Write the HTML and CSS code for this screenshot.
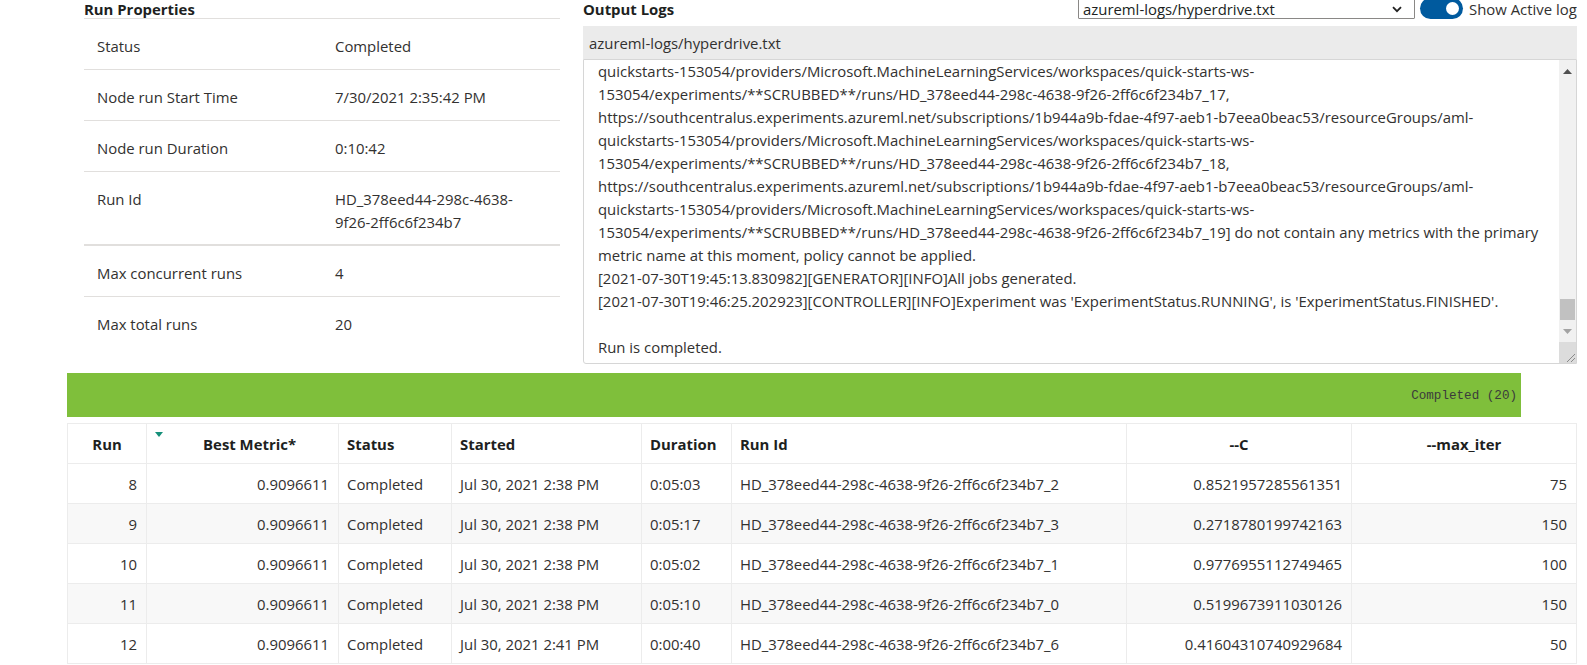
FILE: index.html
```html
<!DOCTYPE html>
<html lang="en">
<head>
<meta charset="utf-8">
<title>Run details</title>
<link rel="stylesheet" href="styles.css">
</head>
<body>
<div class="page">
  <div class="top">
    <section class="props">
      <h2 class="sec-title">Run Properties</h2>
      <div class="prop-row"><div class="prop-label">Status</div><div class="prop-value">Completed</div></div>
      <div class="prop-row"><div class="prop-label">Node run Start Time</div><div class="prop-value">7/30/2021 2:35:42 PM</div></div>
      <div class="prop-row"><div class="prop-label">Node run Duration</div><div class="prop-value">0:10:42</div></div>
      <div class="prop-row prop-row--thick"><div class="prop-label">Run Id</div><div class="prop-value">HD_378eed44-298c-4638-<br>9f26-2ff6c6f234b7</div></div>
      <div class="prop-row"><div class="prop-label">Max concurrent runs</div><div class="prop-value">4</div></div>
      <div class="prop-row prop-row--last"><div class="prop-label">Max total runs</div><div class="prop-value">20</div></div>
    </section>
    <section class="logs">
      <div class="logs-head">
        <h2 class="sec-title logs-title">Output Logs</h2>
        <div class="select">
          <span class="select-text">azureml-logs/hyperdrive.txt</span>
          <svg class="chev" width="10" height="7" viewBox="0 0 10 7"><path d="M1 1.2 L5 5.2 L9 1.2" fill="none" stroke="#222" stroke-width="1.8"/></svg>
        </div>
        <div class="toggle"><span class="knob"></span></div>
        <span class="toggle-label">Show Active logs</span>
      </div>
      <div class="file-bar">azureml-logs/hyperdrive.txt</div>
      <div class="log-box">
        <div class="log-text">
          <div class="log-line">quickstarts-153054/providers/Microsoft.MachineLearningServices/workspaces/quick-starts-ws-</div>
          <div class="log-line">153054/experiments/**SCRUBBED**/runs/HD_378eed44-298c-4638-9f26-2ff6c6f234b7_17,</div>
          <div class="log-line">https://southcentralus.experiments.azureml.net/subscriptions/1b944a9b-fdae-4f97-aeb1-b7eea0beac53/resourceGroups/aml-</div>
          <div class="log-line">quickstarts-153054/providers/Microsoft.MachineLearningServices/workspaces/quick-starts-ws-</div>
          <div class="log-line">153054/experiments/**SCRUBBED**/runs/HD_378eed44-298c-4638-9f26-2ff6c6f234b7_18,</div>
          <div class="log-line">https://southcentralus.experiments.azureml.net/subscriptions/1b944a9b-fdae-4f97-aeb1-b7eea0beac53/resourceGroups/aml-</div>
          <div class="log-line">quickstarts-153054/providers/Microsoft.MachineLearningServices/workspaces/quick-starts-ws-</div>
          <div class="log-line">153054/experiments/**SCRUBBED**/runs/HD_378eed44-298c-4638-9f26-2ff6c6f234b7_19] do not contain any metrics with the primary</div>
          <div class="log-line">metric name at this moment, policy cannot be applied.</div>
          <div class="log-line">[2021-07-30T19:45:13.830982][GENERATOR][INFO]All jobs generated.</div>
          <div class="log-line">[2021-07-30T19:46:25.202923][CONTROLLER][INFO]Experiment was 'ExperimentStatus.RUNNING', is 'ExperimentStatus.FINISHED'.</div>
          <div class="log-line">&nbsp;</div>
          <div class="log-line">Run is completed.</div>
        </div>
        <div class="scrollbar">
          <div class="sb-btn"><svg width="9" height="5" viewBox="0 0 9 5"><path d="M0 5 L4.5 0 L9 5 Z" fill="#505050"/></svg></div>
          <div class="sb-track"><div class="sb-thumb"></div></div>
          <div class="sb-btn"><svg width="9" height="5" viewBox="0 0 9 5"><path d="M0 0 L4.5 5 L9 0 Z" fill="#a3a3a3"/></svg></div>
          <div class="sb-corner"><svg width="10" height="10" viewBox="0 0 10 10"><path d="M10 2 L2 10 M10 6 L6 10" stroke="#8a8a8a" stroke-width="1"/></svg></div>
        </div>
      </div>
    </section>
  </div>

  <div class="progress"><span class="progress-label">Completed (20)</span></div>

  <table class="runs">
    <colgroup>
      <col class="c-run"><col class="c-metric"><col class="c-status"><col class="c-started"><col class="c-dur"><col class="c-id"><col class="c-c"><col class="c-iter">
    </colgroup>
    <thead>
      <tr>
        <th class="center">Run</th>
        <th class="right metric-head"><span class="sort-tri"></span>Best Metric*</th>
        <th>Status</th>
        <th>Started</th>
        <th>Duration</th>
        <th>Run Id</th>
        <th class="center">--C</th>
        <th class="center">--max_iter</th>
      </tr>
    </thead>
    <tbody>
      <tr><td class="right">8</td><td class="right">0.9096611</td><td>Completed</td><td>Jul 30, 2021 2:38 PM</td><td>0:05:03</td><td>HD_378eed44-298c-4638-9f26-2ff6c6f234b7_2</td><td class="right">0.8521957285561351</td><td class="right">75</td></tr>
      <tr><td class="right">9</td><td class="right">0.9096611</td><td>Completed</td><td>Jul 30, 2021 2:38 PM</td><td>0:05:17</td><td>HD_378eed44-298c-4638-9f26-2ff6c6f234b7_3</td><td class="right">0.2718780199742163</td><td class="right">150</td></tr>
      <tr><td class="right">10</td><td class="right">0.9096611</td><td>Completed</td><td>Jul 30, 2021 2:38 PM</td><td>0:05:02</td><td>HD_378eed44-298c-4638-9f26-2ff6c6f234b7_1</td><td class="right">0.9776955112749465</td><td class="right">100</td></tr>
      <tr><td class="right">11</td><td class="right">0.9096611</td><td>Completed</td><td>Jul 30, 2021 2:38 PM</td><td>0:05:10</td><td>HD_378eed44-298c-4638-9f26-2ff6c6f234b7_0</td><td class="right">0.5199673911030126</td><td class="right">150</td></tr>
      <tr><td class="right">12</td><td class="right">0.9096611</td><td>Completed</td><td>Jul 30, 2021 2:41 PM</td><td>0:00:40</td><td>HD_378eed44-298c-4638-9f26-2ff6c6f234b7_6</td><td class="right">0.41604310740929684</td><td class="right">50</td></tr>
    </tbody>
  </table>
</div>
</body>
</html>
```

FILE: styles.css
```css
* { box-sizing: border-box; }

html, body {
  margin: 0;
  padding: 0;
  background: #ffffff;
}

body {
  font-family: "Open Sans", "Noto Sans", "DejaVu Sans", sans-serif;
  font-size: 14.9px;
  color: #323130;
  overflow: hidden;
}

.page {
  width: 1577px;
  padding-left: 67px;
  overflow: hidden;
}

.top {
  display: flex;
  padding-left: 17px;
  height: 364px;
}

.sec-title {
  margin: 0;
  font-size: 14.9px;
  font-weight: 700;
  line-height: 18px;
  height: 18px;
  color: #201f1e;
}

/* ---- Run properties ---- */
.props {
  width: 476px;
  flex: none;
}

.props .sec-title {
  border-bottom: 1px solid #e1dfdd;
  height: 19px;
}

.prop-row {
  display: grid;
  grid-template-columns: 238px 1fr;
  padding: 16px 0 11px 13px;
  line-height: 23px;
  border-bottom: 1px solid #e1dfdd;
}

.prop-row--thick {
  border-bottom: 2px solid #e1dfdd;
  padding-bottom: 10px;
}

.prop-row--last {
  border-bottom: none;
}

/* ---- Logs ---- */
.logs {
  margin-left: 23px;
  width: 994px;
  flex: none;
  overflow: hidden;
}

.logs-head {
  display: flex;
  align-items: flex-start;
  height: 26px;
  white-space: nowrap;
}

.logs-title {
  width: 495px;
  flex: none;
}

.select {
  width: 337px;
  height: 20px;
  margin-top: -1px;
  border: 1px solid #8a8886;
  border-radius: 1px;
  display: flex;
  align-items: center;
  justify-content: space-between;
  padding: 0 12px 0 4px;
  line-height: 18px;
  flex: none;
}

.select-text {
  color: #201f1e;
}

.toggle {
  width: 43px;
  height: 21px;
  margin-top: -2px;
  margin-left: 5px;
  border-radius: 11px;
  background: #005a9e;
  display: flex;
  align-items: center;
  justify-content: flex-end;
  padding-right: 4px;
  flex: none;
}

.knob {
  width: 13px;
  height: 13px;
  border-radius: 50%;
  background: #ffffff;
}

.toggle-label {
  margin-left: 6px;
  line-height: 18px;
  color: #323130;
  flex: none;
}

.file-bar {
  height: 33px;
  background: #ebebeb;
  padding-left: 6px;
  line-height: 35px;
  color: #323130;
}

.log-box {
  height: 305px;
  border: 1px solid #d6d6d6;
  border-radius: 0 0 0 3px;
  display: flex;
}

.log-text {
  flex: 1;
  padding: 0 0 0 14px;
  overflow: hidden;
  white-space: nowrap;
  line-height: 23px;
  color: #323130;
}

.log-line {
  height: 23px;
}

.scrollbar {
  width: 17px;
  flex: none;
  display: flex;
  flex-direction: column;
  background: #f1f1f1;
}

.sb-btn {
  height: 22px;
  display: flex;
  align-items: center;
  justify-content: center;
}

.sb-track {
  flex: 1;
  display: flex;
  flex-direction: column;
  justify-content: flex-end;
}

.sb-thumb {
  height: 21px;
  margin: 0 1px 0 1px;
  background: #c1c1c1;
}

.sb-corner {
  height: 21px;
  background: #dcdcdc;
  display: flex;
  align-items: flex-end;
  justify-content: flex-end;
  padding: 0 1px 1px 0;
}

/* ---- progress bar ---- */
.progress {
  margin-top: 9px;
  width: 1454px;
  height: 44px;
  background: #7fbf3b;
  display: flex;
  align-items: center;
  justify-content: flex-end;
  padding-right: 4px;
}

.progress-label {
  font-family: "Liberation Mono", "DejaVu Sans Mono", monospace;
  font-size: 12.6px;
  color: #3b3b3b;
  margin-top: 2px;
}

/* ---- runs table ---- */
.runs {
  margin-top: 6px;
  width: 1509px;
  border-collapse: collapse;
  table-layout: fixed;
  font-size: 14.9px;
}

.c-run { width: 79px; }
.c-metric { width: 192px; }
.c-status { width: 113px; }
.c-started { width: 190px; }
.c-dur { width: 90px; }
.c-id { width: 395px; }
.c-c { width: 225px; }
.c-iter { width: 225px; }

.runs th,
.runs td {
  border: 1px solid #ececec;
  height: 40px;
  padding: 0 8px;
  text-align: left;
  white-space: nowrap;
  overflow: hidden;
}

.runs th {
  font-weight: 700;
  color: #201f1e;
  background: #ffffff;
}

.runs td {
  color: #323130;
}

.runs tbody tr:nth-child(even) td {
  background: #f8f8f8;
}

.runs .right { text-align: right; padding-right: 9px; }
.runs .center { text-align: center; }

.runs .metric-head {
  position: relative;
  padding-right: 42px;
}

.sort-tri {
  position: absolute;
  left: 8px;
  top: 8px;
  width: 0;
  height: 0;
  border-left: 4.5px solid transparent;
  border-right: 4.5px solid transparent;
  border-top: 5px solid #15907a;
}
```
